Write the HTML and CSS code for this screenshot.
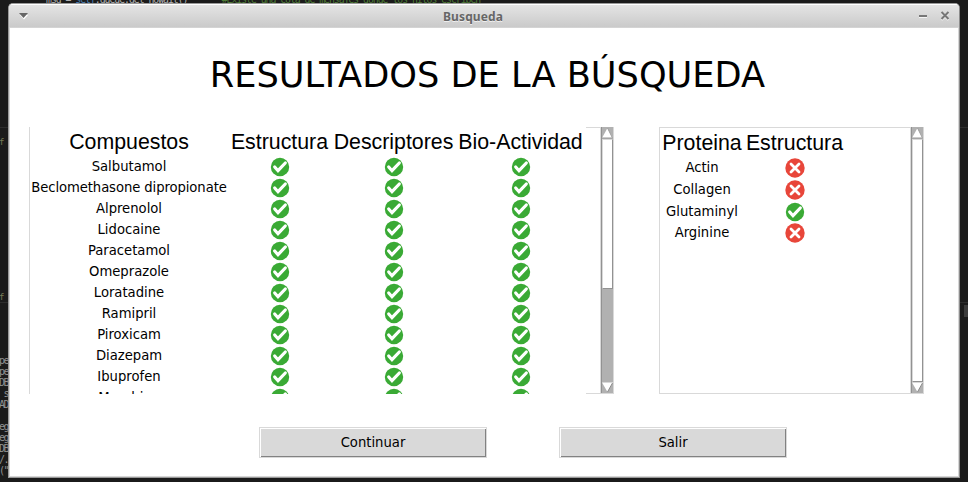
FILE: index.html
```html
<!DOCTYPE html>
<html lang="es">
<head>
<meta charset="utf-8">
<title>Busqueda</title>
<link rel="stylesheet" href="styles.css">
</head>
<body>
<svg class="defs" width="0" height="0">
  <symbol id="ok" viewBox="0 0 20 20"><circle cx="10" cy="10" r="9.2" fill="#3aaa35"/><path d="M4.7 10 L8 13.7 L15.3 6" fill="none" stroke="#fff" stroke-width="3.2" stroke-linecap="round"/></symbol>
  <symbol id="no" viewBox="0 0 20 20"><circle cx="10" cy="10" r="9.7" fill="#e8463a"/><path d="M6 6 L14 14 M14 6 L6 14" fill="none" stroke="#fff" stroke-width="2.8" stroke-linecap="round"/></symbol>
</svg>
<div class="editor">
  <pre class="code top"><span class="w">msg = </span><span class="b">self</span><span class="w">.queue.get_nowait()</span>       <span class="g">#Existe una cola de mensajes donde los hilos escriben</span></pre>
  <pre class="code left">pe
pe
DB
 s
AD

eg
eg
DB
/.
("</pre>
  <i class="mark f1">f</i><i class="mark f2">f</i><i class="line l1"></i><i class="line l2"></i><i class="nub"></i>
</div>
<main class="window">
  <header class="titlebar">
    <svg class="tri" width="10" height="7"><path d="M1 2 L5 6.5 L9 2" fill="#fff"/><path d="M0 0H9L4.5 5Z" fill="#666"/></svg>
    <span class="caption">Busqueda</span>
    <svg class="controls" width="32" height="10"><path d="M1 6.5H9" stroke="#f4f4f4"/><path d="M1 5H9" stroke="#777" stroke-width="2"/><path d="M23.5 2L30.5 9M30.5 2L23.5 9" stroke="#f4f4f4" stroke-width="2"/><path d="M23.5 1L30.5 8M30.5 1L23.5 8" stroke="#777" stroke-width="2"/></svg>
  </header>
  <h1>RESULTADOS DE LA BÚSQUEDA</h1>
  <section class="panels">
    <div class="panel compounds">
      <div class="view">
        <div class="grid">
          <b>Compuestos</b><b>Estructura</b><b>Descriptores</b><b>Bio-Actividad</b>
          <span>Salbutamol</span><svg><use href="#ok"/></svg><svg><use href="#ok"/></svg><svg><use href="#ok"/></svg>
          <span class="long">Beclomethasone dipropionate</span><svg><use href="#ok"/></svg><svg><use href="#ok"/></svg><svg><use href="#ok"/></svg>
          <span>Alprenolol</span><svg><use href="#ok"/></svg><svg><use href="#ok"/></svg><svg><use href="#ok"/></svg>
          <span>Lidocaine</span><svg><use href="#ok"/></svg><svg><use href="#ok"/></svg><svg><use href="#ok"/></svg>
          <span>Paracetamol</span><svg><use href="#ok"/></svg><svg><use href="#ok"/></svg><svg><use href="#ok"/></svg>
          <span>Omeprazole</span><svg><use href="#ok"/></svg><svg><use href="#ok"/></svg><svg><use href="#ok"/></svg>
          <span>Loratadine</span><svg><use href="#ok"/></svg><svg><use href="#ok"/></svg><svg><use href="#ok"/></svg>
          <span>Ramipril</span><svg><use href="#ok"/></svg><svg><use href="#ok"/></svg><svg><use href="#ok"/></svg>
          <span>Piroxicam</span><svg><use href="#ok"/></svg><svg><use href="#ok"/></svg><svg><use href="#ok"/></svg>
          <span>Diazepam</span><svg><use href="#ok"/></svg><svg><use href="#ok"/></svg><svg><use href="#ok"/></svg>
          <span>Ibuprofen</span><svg><use href="#ok"/></svg><svg><use href="#ok"/></svg><svg><use href="#ok"/></svg>
          <span>Morphine</span><svg><use href="#ok"/></svg><svg><use href="#ok"/></svg><svg><use href="#ok"/></svg>
        </div>
      </div>
      <div class="gap"></div>
      <div class="scroll">
        <svg class="arrow" width="11" height="12"><path d="M5.5 1L11 11H0Z" fill="#fff"/><path d="M5.5 1L10.5 11H0" fill="none" stroke="#999"/></svg>
        <div class="thumb"></div>
        <svg class="arrow down" width="11" height="11"><path d="M0 .5H11L5.5 10Z" fill="#fff"/><path d="M10.5 1L5.5 10" stroke="#888"/></svg>
      </div>
    </div>
    <div class="panel proteins">
      <div class="view">
        <div class="grid">
          <b>Proteina</b><b>Estructura</b>
          <span>Actin</span><svg><use href="#no"/></svg>
          <span>Collagen</span><svg><use href="#no"/></svg>
          <span>Glutaminyl</span><svg><use href="#ok"/></svg>
          <span>Arginine</span><svg><use href="#no"/></svg>
        </div>
      </div>
      <div class="scroll">
        <svg class="arrow" width="11" height="12"><path d="M5.5 1L11 11H0Z" fill="#fff"/><path d="M5.5 1L10.5 11H0" fill="none" stroke="#999"/></svg>
        <div class="thumb"></div>
        <svg class="arrow down" width="11" height="11"><path d="M0 .5H11L5.5 10Z" fill="#fff"/><path d="M10.5 1L5.5 10" stroke="#888"/></svg>
      </div>
    </div>
  </section>
  <footer class="actions"><button>Continuar</button><button>Salir</button></footer>
</main>
</body>
</html>
```
FILE: styles.css
```css
* { box-sizing: border-box; }
body { margin: 0; width: 968px; height: 482px; overflow: hidden; background: #1b1b1b; padding: 3px 8px; position: relative; font-family: "DejaVu Sans Condensed", "DejaVu Sans", sans-serif; font-stretch: condensed; }
.defs { position: absolute; }
.editor { position: absolute; inset: 0; overflow: hidden; }
.code { position: absolute; margin: 0; font: 10px/10.95px "DejaVu Sans Mono", monospace; color: #929292; }
.code.top { left: 46px; top: -5px; font-size: 9.8px; letter-spacing: -1.02px; }
.code.left { left: -1px; top: 356px; letter-spacing: -1.5px; }
.w { color: #b0b0b0; }
.b { color: #4a7fb5; }
.g { color: #4d7a36; }
.mark { position: absolute; left: -1px; font: 9px "DejaVu Sans Mono", monospace; color: #777a55; }
.f1 { top: 137px; }
.f2 { top: 292px; }
.line { position: absolute; left: 0; right: 0; height: 1px; background: #2d2d2d; }
.l1 { top: 127px; }
.l2 { top: 302px; }
.nub { position: absolute; left: 964px; top: 305px; width: 4px; height: 12px; background: #3c3c3c; }
.window { position: relative; width: 952px; height: 475px; background: #fff; border: 1px solid #999; border-right-color: #8c8c8c; border-radius: 5px 5px 0 0; box-shadow: inset -1px -1px #d6d6d6, inset 1px 0 #d6d6d6; overflow: hidden; }
.titlebar { height: 24px; display: flex; align-items: center; justify-content: space-between; padding: 0 9px 0 10px; border-top: 1px solid #fff; border-bottom: 1px solid #d4d4d4; background: linear-gradient(#e4e4e4, #cacaca); }
.tri { width: 32px; }
.caption { font: bold 12px/22px "Noto Sans", sans-serif; color: #666; text-shadow: 0 1px #eee; letter-spacing: .1px; margin-right: 23px; padding-top: 1px; }
h1 { margin: 25px 0 0 7px; height: 44px; font-family: "DejaVu Sans", sans-serif; font-stretch: normal; font-size: 35.2px; line-height: 44px; font-weight: 400; text-align: center; color: #000; white-space: nowrap; }
.panels { display: flex; gap: 45px; margin: 30px 0 0 20px; }
.panel { display: flex; height: 267px; border-left: 1px solid #d9d9d9; }
.compounds { width: 585px; }
.proteins { width: 265px; }
.view { overflow: hidden; }
.compounds .view { width: 556px; }
.gap { flex: 1; border: solid #d9d9d9; border-width: 1px 0; }
.proteins .view { flex: 1; border: solid #d9d9d9; border-width: 1px 0; }
.grid { display: grid; justify-items: center; align-items: center; }
.compounds .grid { grid-template-columns: 198px 101px 127px 127px; grid-template-rows: 29px; grid-auto-rows: 21px; }
.proteins .grid { grid-template-columns: 84px 101px; grid-template-rows: 29px 22px 22px 21px 22px; }
.grid b { font: 21.33px/24px "Liberation Sans", sans-serif; white-space: nowrap; }
.grid span { font-size: 14.67px; line-height: 20px; white-space: nowrap; margin-top: -2px; }
.grid .long { letter-spacing: -.08px; }
.grid svg { width: 20px; height: 20px; }
.compounds .grid svg, .compounds .grid b:not(:first-child) { margin-left: 2px; }
.scroll { width: 14px; display: flex; flex-direction: column; background: #b1b1b1; border-left: 1px solid #d9d9d9; border-right: 1px solid #d9d9d9; border-bottom: 1px solid #d9d9d9; box-shadow: inset 1px 0 #929292; padding-left: 1px; }
.arrow { flex: none; }
.thumb { height: 150px; background: #fff; border: 1px solid #d9d9d9; border-right-color: #929292; border-bottom-color: #929292; }
.proteins .thumb { flex: 1; }
.down { margin-top: auto; }
.actions { display: flex; gap: 72px; margin: 33px 0 0 250px; }
button { width: 228px; height: 31px; padding: 0 0 3px 0; border: 1px solid #d9d9d9; background: #d9d9d9; box-shadow: inset 1px 1px #fff, inset -1px -1px #828282; font: 14.67px "DejaVu Sans Condensed", "DejaVu Sans", sans-serif; font-stretch: condensed; color: #000; }
```
